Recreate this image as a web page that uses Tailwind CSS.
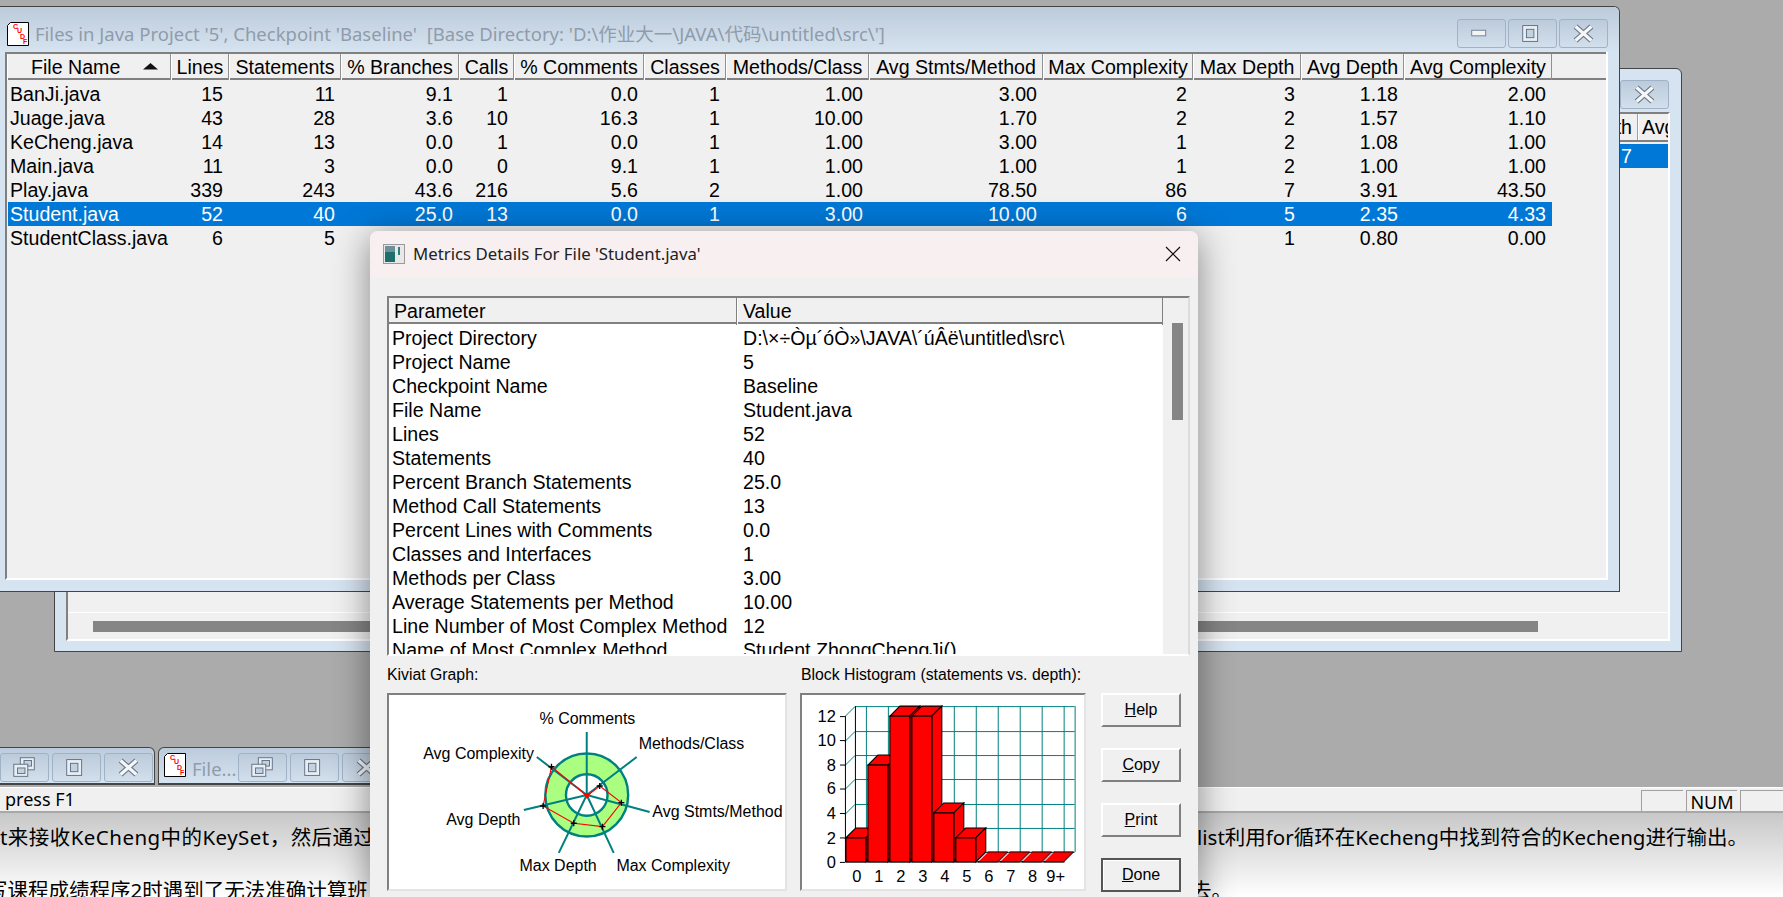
<!DOCTYPE html>
<html lang="en">
<head>
  <meta charset="UTF-8">
  <title>SourceMonitor</title>
  <script src="https://cdn.jsdelivr.net/npm/@tailwindcss/browser@4"></script>
</head>
<body class="bg-white font-['Liberation_Sans','Noto_Sans_CJK_SC',sans-serif] text-black">
<div class="relative flex flex-col w-[1783px] h-[897px] overflow-hidden">

  <!-- MDI desktop -->
  <div class="relative shrink-0 h-[787px] bg-[#ababab]">

    <!-- Back window -->
    <div class="absolute left-[54px] top-[68px] w-[1628px] h-[584px] border border-[#444] rounded-t-md bg-[#d6e3f0] px-[11px] pb-[10px] pt-[43px] flex flex-col">
      <div class="flex justify-end absolute right-[12px] top-[11px]" id="backButtons"></div>
      <div class="flex-1 flex flex-col bg-[#f0f0f0] border-2 border-t-[#808080] border-l-[#808080] border-r-white border-b-white">
        <div class="flex justify-end h-[28px] border-b-2 border-[#808080] text-[19.6px] leading-[26px] overflow-hidden">
          <div class="w-[60px] text-right pr-[5px] border-r border-[#a0a0a0] whitespace-nowrap overflow-hidden">Depth</div>
          <div class="w-[30px] pl-[3px] border-l border-white whitespace-nowrap overflow-hidden">Avg Depth</div>
        </div>
        <div class="mt-[2px] h-[24px] bg-[#0078d7] text-white text-[19.6px] leading-[25px] pl-[1553px]">7</div>
        <div class="flex-1"></div>
        <div class="h-[27px] border-t border-white pt-[8px] pl-[25px]">
          <div class="w-[1445px] h-[11px] bg-[#858585]"></div>
        </div>
      </div>
    </div>

    <!-- Main project window -->
    <div class="absolute left-0 top-[6px] w-[1620px] h-[586px] border border-l-0 border-[#444] rounded-tr-md bg-[#d6e3f0] flex flex-col">
      <div class="h-[45px] flex items-center pt-[8px] bg-linear-to-b from-[#bccbdb] to-[#d6e3f0] rounded-tr-md">
        <div class="ml-[7px]" id="mainIcon"></div>
        <span class="ml-[5px] font-['Noto_Sans','Noto_Sans_CJK_SC',sans-serif] text-[18.5px] text-[#8f9cab] whitespace-pre">Files in Java Project '5', Checkpoint 'Baseline'  [Base Directory: 'D:\作业大一\JAVA\代码\untitled\src\']</span>
        <div class="ml-auto mr-[11px] flex gap-[2px]" id="mainButtons"></div>
      </div>
      <div class="ml-[5px] mr-[11px] h-[528px] bg-[#f0f0f0] border-l-2 border-r-2 border-b-2 border-l-[#808080] border-r-white border-b-white">
        <div class="h-[28px] border-t-2 border-b-2 border-[#808080]">
          <div id="mainHeader" class="w-fit grid grid-cols-[164px_58px_112px_118px_55px_130px_82px_143px_174px_150px_108px_103px_148px] h-[24px] text-[19.6px] leading-[26px]"></div>
        </div>
        <div id="mainRows" class="mt-[2px] w-fit text-[19.6px] leading-[25px]"></div>
      </div>
    </div>

    <!-- Minimised windows -->
    <div class="absolute left-[-10px] top-[747px] w-[165px] h-[38px] border border-b-2 border-[#444] rounded-t-md bg-linear-to-b from-[#bccbdb] to-[#d6e3f0] flex items-start justify-end pt-[5px] pr-[1px] gap-[3px]" id="min1"></div>
    <div class="absolute left-[158px] top-[747px] w-[240px] h-[38px] border border-b-2 border-[#444] rounded-t-md bg-linear-to-b from-[#bccbdb] to-[#d6e3f0] flex items-start pt-[5px] pl-[5px]">
      <div id="min2Icon"></div>
      <span class="ml-[5px] w-[46px] mt-[2px] font-['Noto_Sans',sans-serif] text-[18.5px] text-[#8f9cab]">File...</span>
      <div class="flex gap-[3px]" id="min2"></div>
    </div>
  </div>

  <!-- Status bar -->
  <div class="shrink-0 h-[26px] flex border-t border-white border-b-2 border-b-[#a8a8a8] bg-[#f0f0f0] items-center">
    <span class="ml-[5px] font-['Noto_Sans',sans-serif] text-[18px]">press F1</span>
    <div class="ml-auto flex gap-[3px] h-[22px] mt-[2px]">
      <div class="w-[42px] border-l border-t border-[#a0a0a0]"></div>
      <div class="w-[51px] border-l border-t border-[#a0a0a0] text-[18px] leading-[22px] text-center font-['Noto_Sans',sans-serif]">NUM</div>
      <div class="w-[43px] border-l border-t border-[#a0a0a0]"></div>
    </div>
  </div>

  <!-- Document behind the app -->
  <div class="flex-1 min-h-0 overflow-hidden bg-linear-to-b from-[#c8c8c8] to-white font-['Noto_Sans','Noto_Sans_CJK_SC',sans-serif] text-[20.5px] leading-[48px] whitespace-nowrap">
    <div class="flex h-[48px]">
      <span class="w-[1197px] shrink-0 tracking-[0.45px]">t来接收KeCheng中的KeySet，然后通过</span>
      <span>list利用for循环在Kecheng中找到符合的Kecheng进行输出。</span>
    </div>
    <div class="flex h-[48px] mt-[5px]">
      <span class="w-[1191px] shrink-0 ml-[-13px] pl-0">写课程成绩程序2时遇到了无法准确计算班</span>
      <span class="ml-[13px]">去。</span>
    </div>
  </div>

  <!-- Metrics dialog -->
  <div class="absolute left-[370px] top-[231px] w-[828px] h-[680px] rounded-t-lg bg-[#f0f0f0] shadow-[0_6px_36px_rgba(0,0,0,0.45)]">
    <div class="h-[46px] flex items-center rounded-t-lg bg-[#f8eff1] pl-[13px] pr-[17px]">
      <svg width="22" height="20" viewBox="0 0 22 20">
        <rect x="0.5" y="0.5" width="21" height="19" fill="#e8e8e8" stroke="#9a9a9a"/>
        <rect x="2" y="2" width="10" height="16" fill="#1c6f6a"/>
        <rect x="2" y="2" width="10" height="6" fill="#6f8f9a"/>
        <rect x="15" y="3" width="2" height="8" fill="#2a7f7a"/>
      </svg>
      <span class="ml-[8px] font-['Noto_Sans',sans-serif] text-[16.8px] text-[#222]">Metrics Details For File 'Student.java'</span>
      <svg class="ml-auto" width="16" height="16" viewBox="0 0 16 16"><path d="M1 1L15 15M15 1L1 15" stroke="#111" stroke-width="1.2" fill="none"/></svg>
    </div>

    <div class="px-[17px] pt-[19px]">
      <!-- Parameter list -->
      <div class="flex h-[360px] w-[803px] border-2 border-t-[#808080] border-l-[#808080] border-r-[#dcdcdc] border-b-white">
        <div class="w-[774px] bg-white overflow-hidden text-[19.6px] leading-[25px]">
          <div class="grid grid-cols-[348px_426px] h-[26px] border-b-2 border-[#808080] bg-[#f0f0f0] leading-[27px]">
            <div class="pl-[5px] border-r border-[#808080]">Parameter</div>
            <div class="pl-[5px] border-r border-[#808080] border-l border-l-white">Value</div>
          </div>
          <div id="detailRows" class="mt-[2px]"></div>
        </div>
        <div class="flex-1 bg-[#f0f0f0] pl-[9px] pt-[25px]">
          <div class="w-[11px] h-[97px] bg-[#858585]"></div>
        </div>
      </div>

      <!-- Captions -->
      <div class="flex h-[37px] items-center text-[15.8px] pt-[1px]">
        <span class="w-[414px]">Kiviat Graph:</span>
        <span>Block Histogram (statements vs. depth):</span>
      </div>

      <div class="flex">
        <!-- Kiviat -->
        <div class="w-[401px] h-[198px] bg-white border-2 border-t-[#808080] border-l-[#808080] border-r-[#e4e4e4] border-b-[#e4e4e4]">
          <svg class="w-full h-full" viewBox="2 2 397 194" font-size="16" fill="#000">
            <circle cx="200" cy="102" r="41.5" fill="#aaff80" stroke="#008080" stroke-width="2.4"/>
            <circle cx="200" cy="102" r="20.8" fill="#fff" stroke="#008080" stroke-width="2.4"/>
            <path d="M200 102L200 39M200 102L250 64M200 102L263 119M200 102L227 160M200 102L172 160M200 102L137 117M200 102L150 64" stroke="#008080" stroke-width="2" fill="none"/>
            <polygon points="200.3,102.7 213,93 234.7,109.7 215.7,133.7 187,130.3 156.3,113 164.7,73.7" fill="none" stroke="#f00" stroke-width="1.1"/>
            <path d="M196 100L204.500 100L200.300 106Z" fill="#f00"/>
            <path d="M210 93H216M213 90V96M231.700 109.700H237.700M234.700 106.700V112.700M212.700 133.700H218.700M215.700 130.700V136.700M184 130.300H190M187 127.300V133.300M153.300 113H159.300M156.300 110V116M161.700 73.700H167.700M164.700 70.700V76.700" stroke="#000" stroke-width="1.3"/>
            <text x="152.700" y="31">% Comments</text>
            <text x="252" y="56">Methods/Class</text>
            <text x="36.300" y="66">Avg Complexity</text>
            <text x="265.700" y="124.500">Avg Stmts/Method</text>
            <text x="59.300" y="132.500">Avg Depth</text>
            <text x="132.700" y="178.500">Max Depth</text>
            <text x="229.700" y="178.500">Max Complexity</text>
          </svg>
        </div>

        <!-- Histogram -->
        <div class="ml-[13px] w-[286px] h-[198px] bg-white border-2 border-t-[#808080] border-l-[#808080] border-r-[#e4e4e4] border-b-[#e4e4e4]">
          <svg id="hist" class="w-full h-full" viewBox="2 2 282 194" font-size="16.5"></svg>
        </div>

        <!-- Buttons -->
        <div class="ml-[15px] w-[80px] flex flex-col gap-[21px] text-[16px] leading-[30px] text-center">
          <div class="h-[34px] border-2 border-t-white border-l-white border-r-[#808080] border-b-[#808080]"><u>H</u>elp</div>
          <div class="h-[34px] border-2 border-t-white border-l-white border-r-[#808080] border-b-[#808080]"><u>C</u>opy</div>
          <div class="h-[34px] border-2 border-t-white border-l-white border-r-[#808080] border-b-[#808080]"><u>P</u>rint</div>
          <div class="h-[34px] border-2 border-[#555] shadow-[inset_1px_1px_0_#fff]"><u>D</u>one</div>
        </div>
      </div>
    </div>
  </div>
</div>

<script>
  // Window buttons
  const glyphs = {
    min: '<rect x="14" y="11" width="15" height="6" fill="#f4f4f4" stroke="#6e7f90"/>',
    max: '<rect x="14" y="6" width="16" height="17" fill="#e8eef4" stroke="#5f6f80"/><rect x="18" y="10" width="8" height="9" fill="#c3d2e1" stroke="#5f6f80"/>',
    restore: '<rect x="20" y="4" width="15" height="13" fill="#e8eef4" stroke="#5f6f80"/><rect x="24" y="7" width="8" height="6" fill="#c3d2e1" stroke="#5f6f80"/><rect x="13" y="11" width="15" height="13" fill="#e8eef4" stroke="#5f6f80"/><rect x="17" y="15" width="8" height="6" fill="#c3d2e1" stroke="#5f6f80"/>',
    close: '<path d="M16 7L33 22M33 7L16 22" stroke="#66768a" stroke-width="6"/><path d="M16 7L33 22M33 7L16 22" stroke="#f6f6f6" stroke-width="3.500"/>'
  };
  const winBtn = name => `<div class="w-[49px] h-[29px] border border-[#9fb2c6] rounded-[3px] bg-linear-to-b from-[#bccbdb] to-[#d2dfec]"><svg width="47" height="27" viewBox="0 0 49 29">${glyphs[name]}</svg></div>`;

  const docIcon = `<svg width="23" height="24" viewBox="0 0 23 24" font-size="7" font-weight="700" fill="#f00">
    <path d="M3.500 .5H21.500V23.500H.5V3.500Z" fill="#fff" stroke="#000"/>
    <text x="6" y="7">C</text><text x="10" y="11">U</text><text x="13" y="17">D</text><text x="16" y="22">F</text></svg>`;

  document.getElementById("mainIcon").innerHTML = docIcon;
  document.getElementById("min2Icon").innerHTML = docIcon;
  document.getElementById("mainButtons").innerHTML = winBtn("min") + winBtn("max") + winBtn("close");
  document.getElementById("backButtons").innerHTML = winBtn("close");
  document.getElementById("min1").innerHTML = winBtn("restore") + winBtn("max") + winBtn("close");
  document.getElementById("min2").innerHTML = winBtn("restore") + winBtn("max") + winBtn("close");

  // File table
  const headers = ["File Name", "Lines", "Statements", "% Branches", "Calls", "% Comments", "Classes", "Methods/Class", "Avg Stmts/Method", "Max Complexity", "Max Depth", "Avg Depth", "Avg Complexity"];
  const rows = [
    ["BanJi.java", "15", "11", "9.1", "1", "0.0", "1", "1.00", "3.00", "2", "3", "1.18", "2.00"],
    ["Juage.java", "43", "28", "3.6", "10", "16.3", "1", "10.00", "1.70", "2", "2", "1.57", "1.10"],
    ["KeCheng.java", "14", "13", "0.0", "1", "0.0", "1", "1.00", "3.00", "1", "2", "1.08", "1.00"],
    ["Main.java", "11", "3", "0.0", "0", "9.1", "1", "1.00", "1.00", "1", "2", "1.00", "1.00"],
    ["Play.java", "339", "243", "43.6", "216", "5.6", "2", "1.00", "78.50", "86", "7", "3.91", "43.50"],
    ["Student.java", "52", "40", "25.0", "13", "0.0", "1", "3.00", "10.00", "6", "5", "2.35", "4.33"],
    ["StudentClass.java", "6", "5", "0.0", "0", "0.0", "1", "0.00", "0.00", "0", "1", "0.80", "0.00"]
  ];

  document.getElementById("mainHeader").innerHTML = headers.map((h, i) => i === 0
    ? `<div class="relative pl-[23px] border-r border-[#909090] border-l border-l-white">${h}<svg class="absolute right-[12px] top-[9px]" width="15" height="7" viewBox="0 0 15 7"><path d="M7.500 0L15 6.500H0Z" fill="#111"/></svg></div>`
    : `<div class="text-center border-r border-[#909090] border-l border-l-white whitespace-nowrap">${h}</div>`).join("");

  document.getElementById("mainRows").innerHTML = rows.map((r, n) => {
    const cells = r.map((c, i) => i === 0
      ? `<div class="pl-[2px] whitespace-nowrap">${c}</div>`
      : `<div class="text-right pr-[6px]">${c}</div>`).join("");
    const tone = n === 5 ? "bg-[#0078d7] text-white" : "";
    return `<div class="ml-px grid grid-cols-[163px_58px_112px_118px_55px_130px_82px_143px_174px_150px_108px_103px_148px] h-[24px] ${tone}">${cells}</div>`;
  }).join("");

  // Metric details
  const details = [
    ["Project Directory", "D:\\×÷Òµ´óÒ»\\JAVA\\´úÂë\\untitled\\src\\"],
    ["Project Name", "5"],
    ["Checkpoint Name", "Baseline"],
    ["File Name", "Student.java"],
    ["Lines", "52"],
    ["Statements", "40"],
    ["Percent Branch Statements", "25.0"],
    ["Method Call Statements", "13"],
    ["Percent Lines with Comments", "0.0"],
    ["Classes and Interfaces", "1"],
    ["Methods per Class", "3.00"],
    ["Average Statements per Method", "10.00"],
    ["Line Number of Most Complex Method", "12"],
    ["Name of Most Complex Method", "Student.ZhongChengJi()"]
  ];
  document.getElementById("detailRows").innerHTML = details.map(d =>
    `<div class="grid grid-cols-[348px_426px] h-[24px]"><div class="pl-[3px] whitespace-nowrap">${d[0]}</div><div class="pl-[6px]">${d[1]}</div></div>`).join("");

  // Block histogram
  const teal = "#008080";
  let svg = "";
  [13, 38, 62, 86, 111, 135, 159].forEach(y => {
    svg += `<path d="M55 ${y}.5H275M45 ${y + 10}.5L55 ${y}.5" stroke="${teal}" fill="none"/>`;
  });
  [66, 88, 110, 132, 154, 176, 198, 220, 242, 264, 275].forEach(x => {
    svg += `<path d="M${x}.5 13V159" stroke="${teal}"/>`;
  });
  svg += `<path d="M55.500 13V159M45.500 23V169H265M40 169.500H45M40 145H45M40 120.500H45M40 96H45M40 72H45M40 47.500H45M40 23.500H45" stroke="#000" fill="none"/>`;

  [[46, 145], [68, 72], [90, 23], [112, 23], [134, 120], [156, 145]].forEach(([x, top]) => {
    svg += `<g fill="#f00" stroke="#000" stroke-width="1.100">
      <polygon points="${x},${top} ${x + 10},${top - 10} ${x + 30},${top - 10} ${x + 20},${top}"/>
      <polygon points="${x + 20},${top} ${x + 30},${top - 10} ${x + 30},159 ${x + 20},169"/>
      <rect x="${x}" y="${top}" width="20" height="${169 - top}"/></g>`;
  });
  [178, 200, 222, 244].forEach(x => {
    svg += `<polygon points="${x},169 ${x + 10},159 ${x + 30},159 ${x + 20},169" fill="#f00" stroke="#000"/><path d="M${x + 1} 168L${x + 9} 160" stroke="#fff"/>`;
  });

  [["12", 23], ["10", 47], ["8", 72], ["6", 95], ["4", 120], ["2", 145], ["0", 169]].forEach(([t, y]) => {
    svg += `<text x="36" y="${y + 6}" text-anchor="end">${t}</text>`;
  });
  ["0", "1", "2", "3", "4", "5", "6", "7", "8", "9+"].forEach((t, i) => {
    svg += `<text x="${i === 9 ? 256 : 57 + i * 22}" y="189" text-anchor="middle">${t}</text>`;
  });
  document.getElementById("hist").innerHTML = svg;
</script>
</body>
</html>
